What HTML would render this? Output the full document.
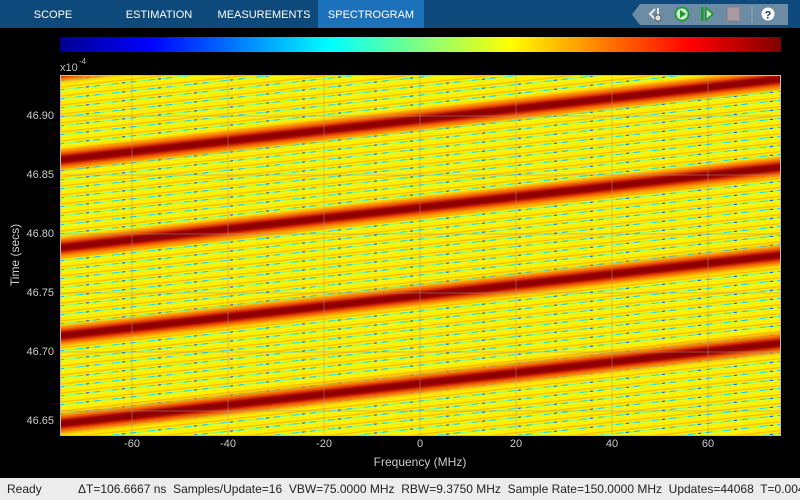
<!DOCTYPE html>
<html><head><style>
body{margin:0;width:800px;height:500px;background:#000;overflow:hidden;font-family:"Liberation Sans",sans-serif;position:relative}
.tb{position:absolute;left:0;top:0;width:800px;height:28px;background:#0d4a7b}
.tab{position:absolute;top:0;height:28px;line-height:30px;color:#fff;font-size:11px;text-align:center}
.st{position:absolute;left:0;top:478px;width:800px;height:22px;background:#ececec;color:#222;font-size:12px;line-height:22px;white-space:nowrap}
.yl{position:absolute;left:22px;width:32px;text-align:right;color:#ccc;font-size:11px}
.xl{position:absolute;top:438px;width:40px;text-align:center;color:#ccc;font-size:11px}
</style></head><body>
<div class="tb"></div>
<div class="tab" style="left:20px;width:66px">SCOPE</div>
<div class="tab" style="left:118px;width:82px">ESTIMATION</div>
<div class="tab" style="left:216px;width:96px">MEASUREMENTS</div>
<div class="tab" style="left:318px;width:106px;background:#1b72ba">SPECTROGRAM</div>
<svg style="position:absolute;left:0;top:0" width="800" height="30">
<polygon points="640,4 788,4 788,25 640,25 632,14.5" fill="#6c8ca6"/>
<path d="M655,9 L650,14 L655,19 M658,8 v10" stroke="#e8e8e8" stroke-width="2" fill="none"/>
<circle cx="658" cy="18" r="3.2" fill="#ddd" stroke="#555"/>
<circle cx="682" cy="14" r="6.5" fill="#cfe8cf" stroke="#1a9a2a" stroke-width="1.8"/>
<polygon points="680,10 686,14 680,18" fill="#1a9a2a"/>
<rect x="701" y="7" width="2.5" height="14" fill="#1a9a2a"/>
<polygon points="706,8 713,14 706,20" fill="#cfe8cf" stroke="#1a9a2a" stroke-width="1.6"/>
<rect x="727" y="7" width="13" height="14" fill="#a999a3" stroke="#8a7a84"/>
<line x1="752" y1="6" x2="752" y2="23" stroke="#8fa5b8"/>
<circle cx="768" cy="14" r="6.5" fill="#fff"/>
<text x="768" y="18.5" font-size="11" font-weight="bold" text-anchor="middle" fill="#0d3b66" font-family="Liberation Sans">?</text>
</svg>
<svg style="position:absolute;left:0;top:0" width="800" height="478">
<defs>
<linearGradient id="cb">
<stop offset="0" stop-color="#00008f"/><stop offset=".125" stop-color="#0000ff"/><stop offset=".375" stop-color="#00ffff"/><stop offset=".5" stop-color="#7fff7f"/><stop offset=".625" stop-color="#ffff00"/><stop offset=".875" stop-color="#ff0000"/><stop offset="1" stop-color="#800000"/>
</linearGradient>
<pattern id="p" width="36" height="9" patternUnits="userSpaceOnUse" patternTransform="skewY(-6.3)">
<rect width="36" height="9" fill="#fff000"/>
<rect y="3" width="36" height="1.5" fill="#ffc000"/>
<rect y="6" width="36" height="1" fill="#80ff80"/>
<rect x="4" y="6" width="7" height="1" fill="#00e0ff"/>
<rect x="22" y="6" width="6" height="1" fill="#00c0ff"/>
<rect x="14" y="6" width="3" height="1" fill="#0030ff"/>
<rect y="7" width="36" height="1" fill="#d8ff40"/>
</pattern>
<filter id="bl"><feGaussianBlur stdDeviation="1.5"/></filter>
<clipPath id="c"><rect x="60" y="75" width="720" height="360"/></clipPath>
</defs>
<rect x="60" y="37" width="721" height="15" fill="url(#cb)"/>
<text x="60" y="71" font-size="11" fill="#bbb" font-family="Liberation Sans">x10</text>
<text x="79" y="64" font-size="8" fill="#bbb" font-family="Liberation Sans">-4</text>
<g clip-path="url(#c)">
<rect x="60" y="75" width="720" height="360" fill="url(#p)"/>
<g fill="none" filter="url(#bl)">
<g id="b">
<path d="M40,162 L800,77" stroke="#ff8a00" stroke-width="20"/>
<path d="M40,162 L800,77" stroke="#e81000" stroke-width="13"/>
<path d="M40,162 L800,77" stroke="#8a0000" stroke-width="8"/>
</g>
<use href="#b" y="88"/><use href="#b" y="176"/><use href="#b" y="264"/><use href="#b" y="-88"/>
</g>
<g stroke="#999" stroke-opacity=".5" stroke-width="1">
<path d="M132,75v360M228,75v360M324,75v360M420,75v360M516,75v360M612,75v360M708,75v360"/>
<path d="M60,116h720M60,175h720M60,234h720M60,293h720M60,352h720M60,411h720"/>
</g>
</g>
<rect x="60.5" y="75.5" width="720" height="360" fill="none" stroke="#bbb"/>
<text x="19" y="255" font-size="12" fill="#ccc" transform="rotate(-90 19 255)" text-anchor="middle" font-family="Liberation Sans">Time (secs)</text>
<text x="420" y="466" font-size="12" fill="#ccc" text-anchor="middle" font-family="Liberation Sans">Frequency (MHz)</text>
</svg>
<div class="yl" style="top:110px">46.90</div>
<div class="yl" style="top:169px">46.85</div>
<div class="yl" style="top:228px">46.80</div>
<div class="yl" style="top:287px">46.75</div>
<div class="yl" style="top:346px">46.70</div>
<div class="yl" style="top:415px">46.65</div>
<div class="xl" style="left:112px">-60</div>
<div class="xl" style="left:208px">-40</div>
<div class="xl" style="left:304px">-20</div>
<div class="xl" style="left:400px">0</div>
<div class="xl" style="left:496px">20</div>
<div class="xl" style="left:592px">40</div>
<div class="xl" style="left:688px">60</div>
<div class="st"><span style="position:absolute;left:7px">Ready</span><span style="position:absolute;left:78px">ΔT=106.6667 ns&nbsp; Samples/Update=16&nbsp; VBW=75.0000 MHz&nbsp; RBW=9.3750 MHz&nbsp; Sample Rate=150.0000 MHz&nbsp; Updates=44068&nbsp; T=0.004</span></div>
</body></html>
